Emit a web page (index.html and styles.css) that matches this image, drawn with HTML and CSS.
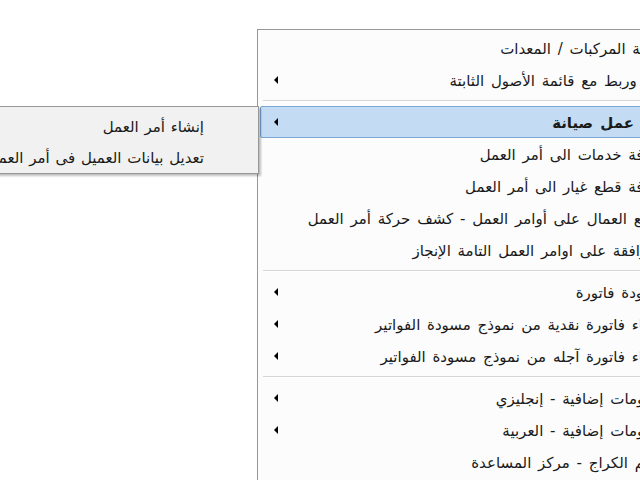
FILE: index.html
```html
<!DOCTYPE html>
<html lang="ar">
<head>
	<meta charset="UTF-8">
	<title>قائمة</title>
	<link rel="stylesheet" href="styles.css">
</head>
<body>
	<div class="desk">
		<div class="menu main" dir="rtl">
			<div class="item"><span class="label">قائمة المركبات / المعدات</span></div>
			<div class="item"><span class="label">فتح وربط مع قائمة الأصول الثابتة</span><span class="arrow"></span></div>
			<div class="sep"></div>
			<div class="item hot"><span class="label">أمر عمل صيانة</span><span class="arrow"></span></div>
			<div class="item"><span class="label">إضافة خدمات الى أمر العمل</span></div>
			<div class="item"><span class="label">إضافة قطع غيار الى أمر العمل</span></div>
			<div class="item"><span class="label">توزيع العمال على أوامر العمل - كشف حركة أمر العمل</span></div>
			<div class="item"><span class="label">الموافقة على اوامر العمل التامة الإنجاز</span></div>
			<div class="sep"></div>
			<div class="item"><span class="label">مسودة فاتورة</span><span class="arrow"></span></div>
			<div class="item"><span class="label">إنشاء فاتورة نقدية من نموذج مسودة الفواتير</span><span class="arrow"></span></div>
			<div class="item"><span class="label">إنشاء فاتورة آجله من نموذج مسودة الفواتير</span><span class="arrow"></span></div>
			<div class="sep"></div>
			<div class="item"><span class="label">معلومات إضافية - إنجليزي</span><span class="arrow"></span></div>
			<div class="item"><span class="label">معلومات إضافية - العربية</span><span class="arrow"></span></div>
			<div class="item"><span class="label">نظام الكراج - مركز المساعدة</span></div>
		</div>

		<div class="menu sub" dir="rtl">
			<div class="item"><span class="label">إنشاء أمر العمل</span></div>
			<div class="item"><span class="label">تعديل بيانات العميل فى أمر العمل</span></div>
		</div>
	</div>
</body>
</html>
```

FILE: styles.css
```css
*{
	margin:0;
	padding:0;
	box-sizing:border-box;
}
html,body{
	width:640px;
	height:480px;
	overflow:hidden;
	background:#fff;
}
.desk{
	position:relative;
	width:640px;
	height:480px;
	overflow:hidden;
	font-family:"DejaVu Sans",sans-serif;
	font-size:15px;
	word-spacing:2px;
	color:#1a1a1a;
}
.menu{
	position:absolute;
	border:1px solid #979797;
	background:#fcfcfc;
	padding:2px;
}
.main{
	left:257px;
	top:29px;
	width:450px;
}
.sub{
	left:-100px;
	top:106px;
	width:359px;
	background:#f1f1f1;
	padding:3px 2px 1px;
	box-shadow:2px 2px 2px rgba(0,0,0,0.25);
	word-spacing:1px;
}
.item{
	display:flex;
	align-items:center;
	height:32px;
	padding:0 38px 0 13px;
	border:1px solid transparent;
	white-space:nowrap;
}
.sub .item{
	height:31px;
	padding-right:51px;
}
.label{
	line-height:16px;
	padding-top:2px;
}
.arrow{
	margin-right:auto;
	width:0;
	height:0;
	border-top:4px solid transparent;
	border-bottom:4px solid transparent;
	border-right:4px solid #000;
}
.hot{
	background:#c3dcf3;
	border-color:#7aa6d6;
	border-radius:2px;
}
.hot .label{
	font-weight:bold;
}
.sep{
	height:10px;
	padding-top:4px;
	margin-left:3px;
}
.sep::before{
	content:"";
	display:block;
	height:1px;
	background:#d5d5d5;
	border-bottom:1px solid #fff;
	box-sizing:content-box;
}
```
